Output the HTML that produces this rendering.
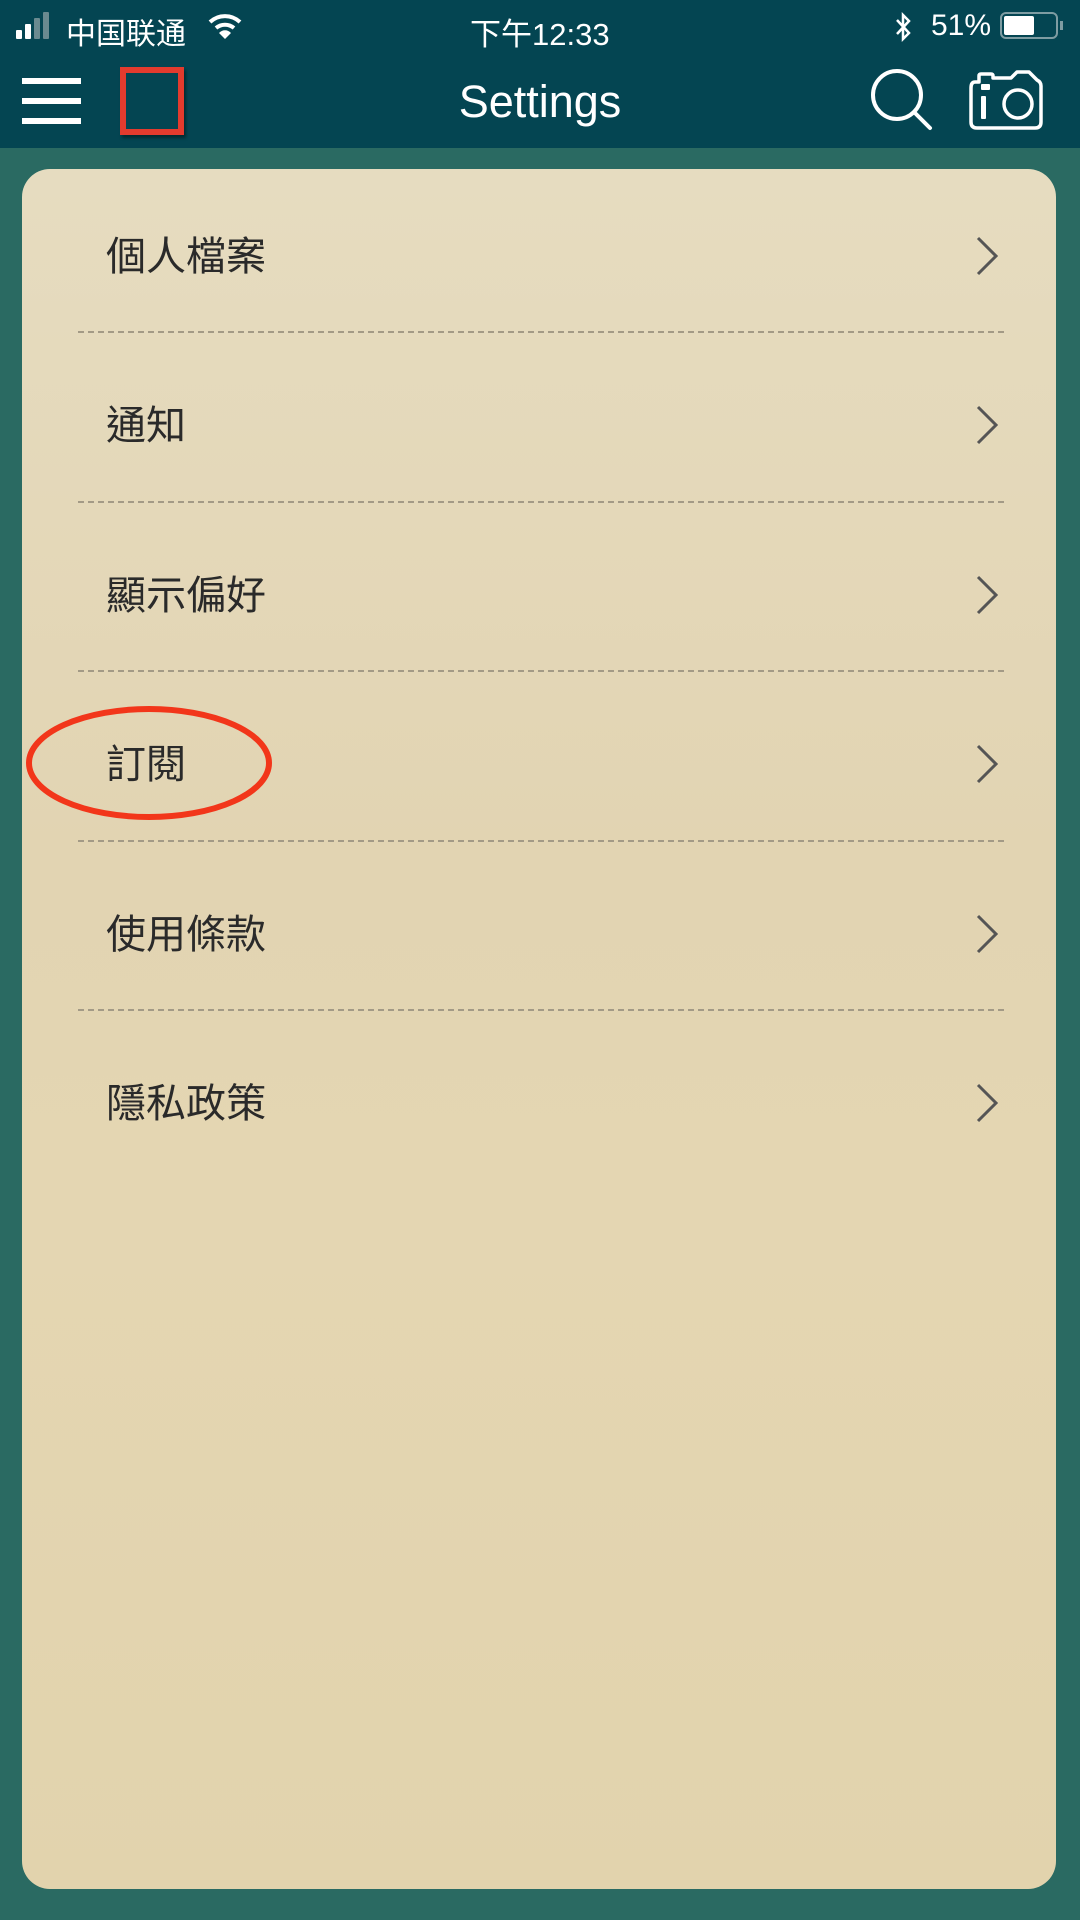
<!DOCTYPE html>
<html><head><meta charset="utf-8"><style>
*{margin:0;padding:0;box-sizing:border-box}
body{width:1080px;height:1920px;background:#2a6a62;position:relative;overflow:hidden;font-family:"Liberation Sans","Noto Sans CJK TC",sans-serif}
.hdr{position:absolute;left:0;top:0;width:1080px;height:148px;background:#044552}
.st{position:absolute;color:#fff;font-size:30px;top:9px;font-family:"Liberation Sans","Noto Sans CJK SC",sans-serif}
.card{position:absolute;left:22px;top:169px;width:1034px;height:1720px;border-radius:28px;background:linear-gradient(180deg,#e6dcc0 0%,#e2d4b2 40%,#e4d6b2 60%,#e2d3ad 100%)}
.row{position:absolute;left:106px;font-size:40px;color:#2a2a2a;line-height:1}
.chev{position:absolute;left:974px;width:26px;height:40px}
.div{position:absolute;left:78px;width:926px;border-top:2px dashed #a39a86}
</style></head><body>
<div class="hdr"></div>
<div style="position:absolute;left:16px;top:30px;width:6px;height:9px;background:#fff;border-radius:1px"></div>
<div style="position:absolute;left:25px;top:24px;width:6px;height:15px;background:#fff;border-radius:1px"></div>
<div style="position:absolute;left:34px;top:18px;width:6px;height:21px;background:#6a8a90;border-radius:1px"></div>
<div style="position:absolute;left:43px;top:12px;width:6px;height:27px;background:#6a8a90;border-radius:1px"></div>
<div class="st" style="left:66px">中国联通</div>
<svg style="position:absolute;left:208px;top:12px" width="34" height="28" viewBox="0 0 34 28"><path d="M2 10 A22 22 0 0 1 32 10" stroke="#fff" stroke-width="4" fill="none"/><path d="M8 16 A14 14 0 0 1 26 16" stroke="#fff" stroke-width="4" fill="none"/><path d="M17 27 L11 21 A8 8 0 0 1 23 21 Z" fill="#fff"/></svg>
<div class="st" style="left:470px;font-size:31px">下午12:33</div>
<svg style="position:absolute;left:893px;top:12px" width="20" height="30" viewBox="0 0 20 30"><path d="M4 8 L16 21 L10 27 L10 3 L16 9 L4 22" stroke="#fff" stroke-width="2.5" fill="none"/></svg>
<div class="st" style="left:931px">51%</div>
<div style="position:absolute;left:1000px;top:12px;width:58px;height:27px;border:2px solid #7e9ca2;border-radius:6px"></div>
<div style="position:absolute;left:1004px;top:16px;width:30px;height:19px;background:#fff;border-radius:2px"></div>
<div style="position:absolute;left:1060px;top:21px;width:3px;height:9px;background:#7e9ca2"></div>
<div style="position:absolute;left:22px;top:78px;width:59px;height:6px;background:#fff"></div>
<div style="position:absolute;left:22px;top:98px;width:59px;height:6px;background:#fff"></div>
<div style="position:absolute;left:22px;top:118px;width:59px;height:6px;background:#fff"></div>
<div style="position:absolute;left:120px;top:67px;width:64px;height:68px;border:6px solid #e33b2e;box-shadow:2px 3px 3px rgba(0,0,0,.4)"></div>
<div style="position:absolute;left:0;width:1080px;top:76px;text-align:center;color:#fff;font-size:45px">Settings</div>
<svg style="position:absolute;left:868px;top:66px" width="70" height="66" viewBox="0 0 70 66"><circle cx="29" cy="29" r="24" stroke="#fff" stroke-width="4" fill="none"/><path d="M46 46 L62 62" stroke="#fff" stroke-width="4" stroke-linecap="round"/></svg>
<svg style="position:absolute;left:967px;top:68px" width="80" height="64" viewBox="0 0 80 64"><path d="M8 14 H12 V8 Q12 6 14 6 H24 Q26 6 26 8 V10 H44 L50 4 H62 L70 12 Q74 14 74 18 V54 Q74 60 68 60 H10 Q4 60 4 54 V20 Q4 14 8 14 Z" stroke="#fff" stroke-width="3.5" fill="none" stroke-linejoin="round"/><rect x="14" y="16" width="9" height="6" rx="1" fill="#fff"/><rect x="14" y="28" width="5" height="23" rx="1" fill="#fff"/><circle cx="51" cy="36" r="14" stroke="#fff" stroke-width="3.5" fill="none"/></svg>
<div class="card"></div>
<div class="row" style="top:237px">個人檔案</div>
<div class="row" style="top:406px">通知</div>
<div class="row" style="top:576px">顯示偏好</div>
<div class="row" style="top:745px">訂閱</div>
<div class="row" style="top:915px">使用條款</div>
<div class="row" style="top:1084px">隱私政策</div>
<svg class="chev" style="top:236px" viewBox="0 0 26 40"><path d="M4 2 L22 20 L4 38" stroke="#555" stroke-width="3" fill="none"/></svg>
<svg class="chev" style="top:405px" viewBox="0 0 26 40"><path d="M4 2 L22 20 L4 38" stroke="#555" stroke-width="3" fill="none"/></svg>
<svg class="chev" style="top:575px" viewBox="0 0 26 40"><path d="M4 2 L22 20 L4 38" stroke="#555" stroke-width="3" fill="none"/></svg>
<svg class="chev" style="top:744px" viewBox="0 0 26 40"><path d="M4 2 L22 20 L4 38" stroke="#555" stroke-width="3" fill="none"/></svg>
<svg class="chev" style="top:914px" viewBox="0 0 26 40"><path d="M4 2 L22 20 L4 38" stroke="#555" stroke-width="3" fill="none"/></svg>
<svg class="chev" style="top:1083px" viewBox="0 0 26 40"><path d="M4 2 L22 20 L4 38" stroke="#555" stroke-width="3" fill="none"/></svg>
<div class="div" style="top:331px"></div>
<div class="div" style="top:501px"></div>
<div class="div" style="top:670px"></div>
<div class="div" style="top:840px"></div>
<div class="div" style="top:1009px"></div>
<svg style="position:absolute;left:20px;top:700px" width="260" height="130"><ellipse cx="129" cy="63" rx="120" ry="54" stroke="#f2361a" stroke-width="6" fill="none"/></svg>
</body></html>
